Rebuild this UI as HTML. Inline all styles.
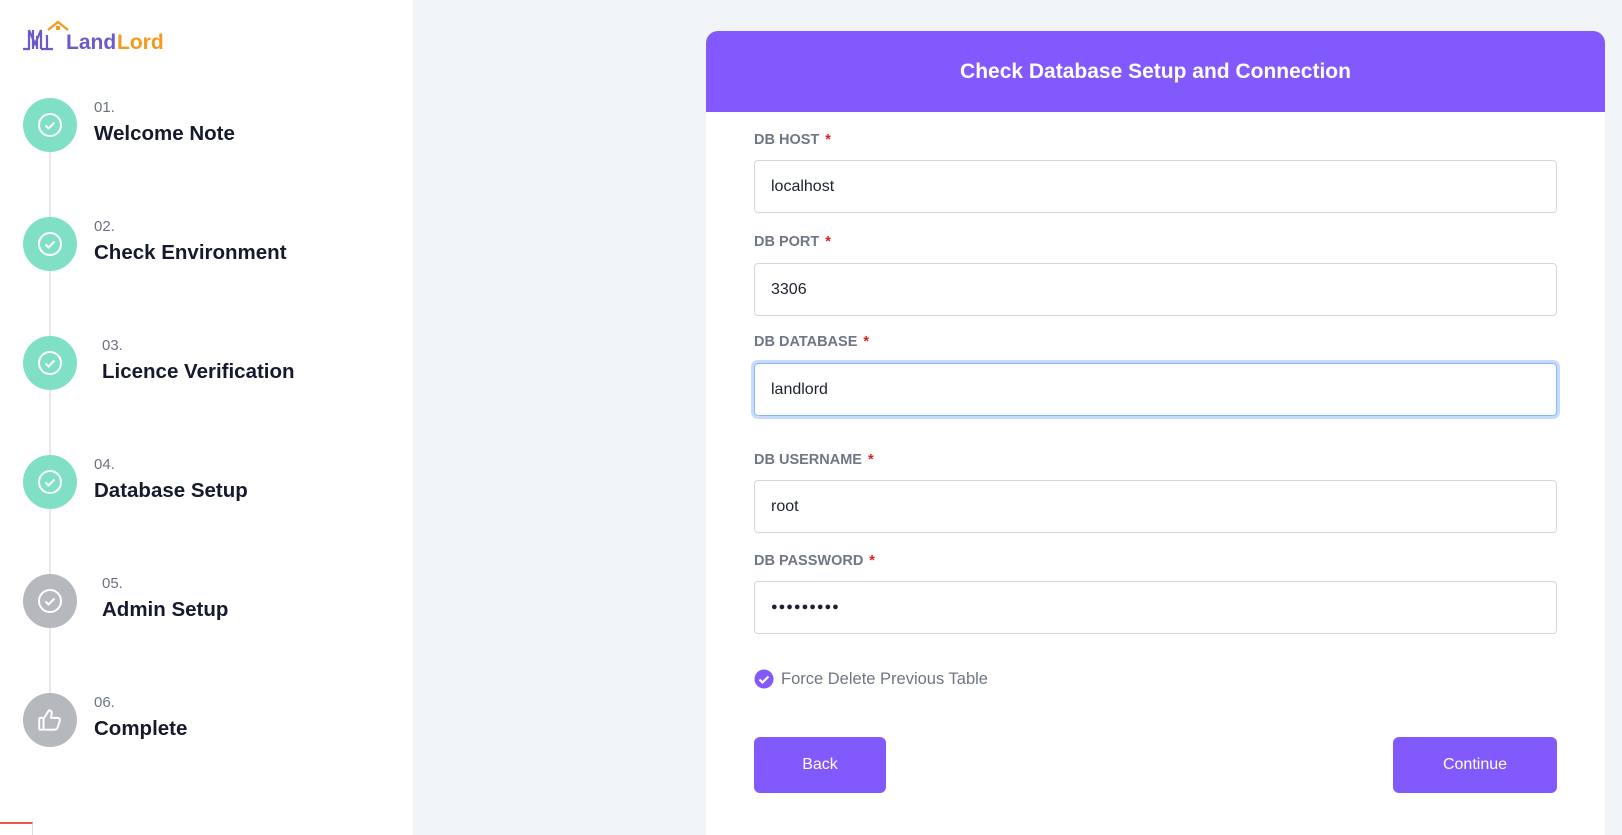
<!DOCTYPE html>
<html><head><style>
*{box-sizing:border-box;margin:0;padding:0}
html,body{width:1622px;height:835px;overflow:hidden}
body{background:#f2f5f8;font-family:"Liberation Sans",sans-serif;position:relative}
.side{position:absolute;left:0;top:0;width:413px;height:835px;background:#fff}
.line{position:absolute;left:49px;top:150px;width:2px;height:545px;background:#e8e8ec}
.c{position:absolute;left:23px;width:54px;height:54px;border-radius:50%;display:flex;align-items:center;justify-content:center}
.g{background:#7fe0c6}.gr{background:#b5b8bd}
.num{position:absolute;font-size:15px;color:#6c7380}
.ttl{position:absolute;font-size:20.5px;font-weight:bold;color:#151a2c}
.card{position:absolute;left:706px;top:31px;width:899px;height:804px;background:#fff;border-radius:12px 12px 0 0;overflow:hidden}
.hd{height:81px;background:#8259fd;color:#fff;font-size:21px;font-weight:bold;text-align:center;line-height:81px}
.lb{position:absolute;left:48px;font-size:14.5px;font-weight:bold;color:#707683}
.lb span{color:#e21c1c;margin-left:6px}
.in{position:absolute;left:48px;width:803px;height:53px;border:1px solid #d3d6db;border-radius:4px;font-size:16px;color:#1d2230;padding-left:16px;line-height:51px}
.btn{position:absolute;top:706px;height:56px;background:#8259fd;color:#fff;border-radius:6px;font-size:16px;text-align:center;line-height:56px}
</style></head><body>
<div class="side">
<svg style="position:absolute;left:22px;top:18px" width="145" height="36" viewBox="0 0 145 36">
<g fill="none" stroke="#6a5bc9" stroke-width="2.2"><path d="M1 31H7V12M7 12L13 26L19 12V31M19 31H25M25 31V17M25 31H31"/><path d="M11 12V31M15 18V31"/></g>
<path d="M26 12L36 4L46 12" fill="none" stroke="#f39a1f" stroke-width="2.4"/>
<rect x="34" y="8" width="4" height="4" fill="#f39a1f"/>
<text x="44" y="31" font-family="Liberation Sans" font-weight="bold" font-size="21" fill="#6a5bc9">Land</text>
<text x="95" y="31" font-family="Liberation Sans" font-weight="bold" font-size="21" fill="#f39a1f">Lord</text>
</svg>
<div class="line"></div>
<div class="c g" style="top:98px"><svg width="26" height="26" viewBox="0 0 26 26"><circle cx="13" cy="13" r="11" fill="none" stroke="#fff" stroke-width="2"/><path d="M8.5 13.5l3 3 6-6" fill="none" stroke="#fff" stroke-width="2"/></svg></div>
<div class="c g" style="top:217px"><svg width="26" height="26" viewBox="0 0 26 26"><circle cx="13" cy="13" r="11" fill="none" stroke="#fff" stroke-width="2"/><path d="M8.5 13.5l3 3 6-6" fill="none" stroke="#fff" stroke-width="2"/></svg></div>
<div class="c g" style="top:336px"><svg width="26" height="26" viewBox="0 0 26 26"><circle cx="13" cy="13" r="11" fill="none" stroke="#fff" stroke-width="2"/><path d="M8.5 13.5l3 3 6-6" fill="none" stroke="#fff" stroke-width="2"/></svg></div>
<div class="c g" style="top:455px"><svg width="26" height="26" viewBox="0 0 26 26"><circle cx="13" cy="13" r="11" fill="none" stroke="#fff" stroke-width="2"/><path d="M8.5 13.5l3 3 6-6" fill="none" stroke="#fff" stroke-width="2"/></svg></div>
<div class="c gr" style="top:574px"><svg width="26" height="26" viewBox="0 0 26 26"><circle cx="13" cy="13" r="11" fill="none" stroke="#fff" stroke-width="2"/><path d="M8.5 13.5l3 3 6-6" fill="none" stroke="#fff" stroke-width="2"/></svg></div>
<div class="c gr" style="top:693px"><svg width="28" height="28" viewBox="0 0 26 26"><rect x="3" y="11" width="4" height="11" rx="1" fill="none" stroke="#fff" stroke-width="1.8"/><path d="M7 12l5-8c2 0 3 1 2.5 3.5L14 11h6c2 0 2.5 1.5 2 3l-2 6c-.5 1.5-1.5 2-3 2H7" fill="none" stroke="#fff" stroke-width="1.8" stroke-linejoin="round"/></svg></div>
<div class="num" style="left:94px;top:99px">01.</div><div class="ttl" style="left:94px;top:122px">Welcome Note</div>
<div class="num" style="left:94px;top:218px">02.</div><div class="ttl" style="left:94px;top:241px">Check Environment</div>
<div class="num" style="left:102px;top:337px">03.</div><div class="ttl" style="left:102px;top:360px">Licence Verification</div>
<div class="num" style="left:94px;top:456px">04.</div><div class="ttl" style="left:94px;top:479px">Database Setup</div>
<div class="num" style="left:102px;top:575px">05.</div><div class="ttl" style="left:102px;top:598px">Admin Setup</div>
<div class="num" style="left:94px;top:694px">06.</div><div class="ttl" style="left:94px;top:717px">Complete</div>
<div style="position:absolute;left:0;top:822px;width:33px;height:13px;border-top:2px solid #f05454;border-right:1px solid #ddd"></div>
</div>
<div class="card">
<div class="hd">Check Database Setup and Connection</div>
<div class="lb" style="top:101px">DB HOST<span>*</span></div>
<div class="in" style="top:129px">localhost</div>
<div class="lb" style="top:203px">DB PORT<span>*</span></div>
<div class="in" style="top:232px">3306</div>
<div class="lb" style="top:303px">DB DATABASE<span>*</span></div>
<div class="in" style="top:332px;border:1px solid #86b7fe;box-shadow:0 0 0 3px #c7dcfc">landlord</div>
<div class="lb" style="top:421px">DB USERNAME<span>*</span></div>
<div class="in" style="top:449px">root</div>
<div class="lb" style="top:522px">DB PASSWORD<span>*</span></div>
<div class="in" style="top:550px;letter-spacing:1px;font-size:11px">●●●●●●●●●</div>
<div style="position:absolute;left:48px;top:638px;display:flex;align-items:center;font-size:16.5px;color:#6f7682">
<svg width="20" height="20" viewBox="0 0 20 20" style="margin-right:7px"><circle cx="10" cy="10" r="9.5" fill="#8259fd"/><path d="M5.5 10.5l3 3 6-6" fill="none" stroke="#fff" stroke-width="2.2"/></svg>Force Delete Previous Table</div>
<div class="btn" style="left:48px;width:132px">Back</div>
<div class="btn" style="left:687px;width:164px">Continue</div>
</div>
</body></html>
